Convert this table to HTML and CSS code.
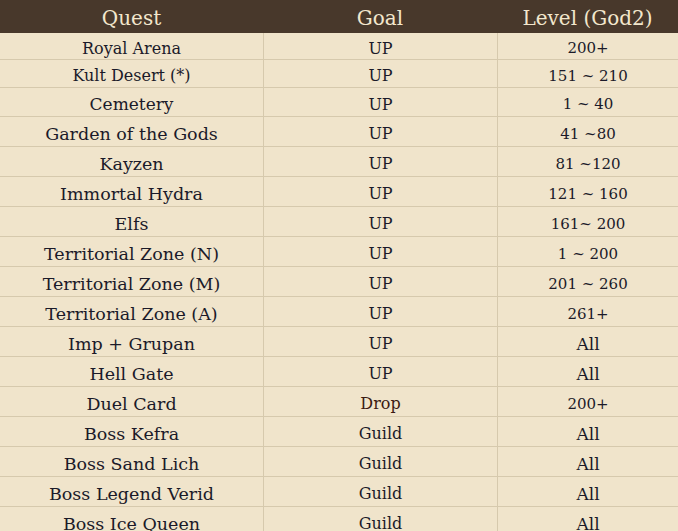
FILE: index.html
```html
<!DOCTYPE html>
<html>
<head>
<meta charset="utf-8">
<link rel="stylesheet" href="styles.css">
</head>
<body>
<div class="table">
  <div class="row head"><div class="c">Quest</div><div class="c">Goal</div><div class="c">Level (God2)</div></div>
  <div class="row r1"><div class="c q sm">Royal Arena</div><div class="c g">UP</div><div class="c l">200+</div></div>
  <div class="row r2"><div class="c q sm">Kult Desert (*)</div><div class="c g">UP</div><div class="c l">151 ~ 210</div></div>
  <div class="row r3"><div class="c q md">Cemetery</div><div class="c g">UP</div><div class="c l">1 ~ 40</div></div>
  <div class="row"><div class="c q">Garden of the Gods</div><div class="c g">UP</div><div class="c l">41 ~80</div></div>
  <div class="row"><div class="c q">Kayzen</div><div class="c g">UP</div><div class="c l">81 ~120</div></div>
  <div class="row"><div class="c q">Immortal Hydra</div><div class="c g">UP</div><div class="c l">121 ~ 160</div></div>
  <div class="row"><div class="c q">Elfs</div><div class="c g">UP</div><div class="c l">161~ 200</div></div>
  <div class="row"><div class="c q">Territorial Zone (N)</div><div class="c g">UP</div><div class="c l">1 ~ 200</div></div>
  <div class="row"><div class="c q">Territorial Zone (M)</div><div class="c g">UP</div><div class="c l">201 ~ 260</div></div>
  <div class="row"><div class="c q">Territorial Zone (A)</div><div class="c g">UP</div><div class="c l">261+</div></div>
  <div class="row"><div class="c q">Imp + Grupan</div><div class="c g">UP</div><div class="c l w">All</div></div>
  <div class="row"><div class="c q">Hell Gate</div><div class="c g">UP</div><div class="c l w">All</div></div>
  <div class="row"><div class="c q">Duel Card</div><div class="c g drop">Drop</div><div class="c l">200+</div></div>
  <div class="row"><div class="c q">Boss Kefra</div><div class="c g">Guild</div><div class="c l w">All</div></div>
  <div class="row"><div class="c q">Boss Sand Lich</div><div class="c g">Guild</div><div class="c l w">All</div></div>
  <div class="row"><div class="c q">Boss Legend Verid</div><div class="c g">Guild</div><div class="c l w">All</div></div>
  <div class="row"><div class="c q">Boss Ice Queen</div><div class="c g">Guild</div><div class="c l w">All</div></div>
</div>
</body>
</html>
```
FILE: styles.css
```css
html, body {
  margin: 0;
  padding: 0;
  background: #f0e4cb;
}
body {
  font-family: "DejaVu Serif", "Liberation Serif", serif;
  color: #1b1a29;
  overflow: hidden;
}
.table {
  width: 678px;
}
.row {
  display: grid;
  grid-template-columns: 263px 234px 1fr;
  height: 30px;
  box-sizing: border-box;
  border-bottom: 1px solid #d6c9ad;
}
.row .c {
  display: flex;
  align-items: center;
  justify-content: center;
  box-sizing: border-box;
  white-space: nowrap;
  padding-top: 4px;
}
.row .c + .c {
  border-left: 1px solid #d6c9ad;
}
.head {
  height: 33px;
  background: #48382b;
  border-bottom: none;
  color: #f3e7cd;
  font-size: 20px;
}
.head .c + .c {
  border-left: none;
}
.row.head .c {
  padding-top: 2px;
}
.r1 { height: 27px; }
.r2 { height: 28px; }
.r3 { height: 29px; }
.q {
  font-size: 17.5px;
}
.q.sm { font-size: 16px; }
.q.md { font-size: 17px; }
.g {
  font-size: 16px;
}
.l {
  font-size: 15px;
}
.l.w {
  font-size: 17px;
}
.drop {
  color: #3b1a12;
}
```
